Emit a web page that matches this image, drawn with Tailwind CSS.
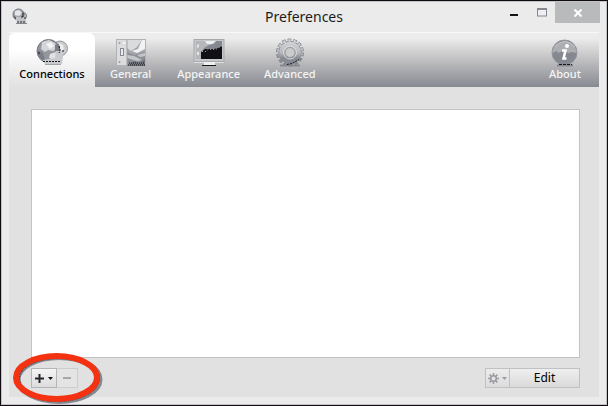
<!DOCTYPE html>
<html lang="en">
<head>
<meta charset="utf-8">
<title>Preferences</title>
<script src="https://cdn.jsdelivr.net/npm/@tailwindcss/browser@4"></script>
</head>
<body class="min-h-screen flex flex-col border border-[#100c12] px-px pt-[2px] pb-px shadow-[inset_0_0_0_1px_#c3c3c6] bg-[#ebebeb] font-['Noto_Sans','Open_Sans',sans-serif] text-black">
  <header class="relative flex h-[29px] shrink-0 items-start justify-center">
    <svg class="absolute left-[10px] top-[5px]" width="16" height="17" viewBox="0 0 16 17" aria-hidden="true">
      <circle cx="11" cy="8" r="3.500" fill="#c4c5c8" stroke="#777a82"/>
      <circle cx="6.500" cy="6.500" r="5.500" fill="#a4a6ab" stroke="#6f727a"/>
      <path d="M3 3l4-1 3 3-3 3-4-1z" fill="#e6e6e8"/>
      <path d="M1 8l3 1 1 3-2-1zM10 4l2 1 0 4-2 1z" fill="#5b5e66"/>
      <path d="M4 9h10v6H6l-2-3z" fill="#c2c3c7"/>
      <path d="M5 14h9M10 8v3M13 9v3" stroke="#222" stroke-dasharray="2 1"/>
      <path d="M4 15.500h11" stroke="#85888f"/>
    </svg>
    <h1 class="text-[14px] leading-[28px] text-[#1c1c20]">Preferences</h1>
    <div class="absolute right-[6px] -top-px flex">
      <button aria-label="Minimize" class="flex h-[21px] w-[28px] items-center justify-center"><svg width="8" height="8"><rect y="5" width="8" height="2" fill="#141418"/></svg></button>
      <button aria-label="Maximize" class="flex h-[21px] w-[27px] items-center justify-center"><svg width="10" height="9"><rect x=".5" y=".5" width="9" height="7.500" fill="#efefef" stroke="#85888f"/><path d="M0 1h10" stroke="#85888f" stroke-width="2"/></svg></button>
      <button aria-label="Close" class="flex h-[21px] w-[45px] items-center justify-center bg-[#b9babc]"><svg width="8" height="8"><path d="M.5 .5l7 7M7.500 .5l-7 7" stroke="#fff" stroke-width="2"/></svg></button>
    </div>
  </header>

  <main class="mx-[7px] mb-[7px] flex flex-1 flex-col bg-[#e1e1e1]">
    <nav class="flex h-[55px] shrink-0 border-t border-[#f8f8f8] bg-linear-to-b from-[#ececec] from-10% via-[#bababc] via-55% to-[#878a92] text-[11px] font-medium leading-[14px] text-[#f4f4f4]" aria-label="Preference sections">
      <button class="flex w-[86px] flex-col items-center rounded-t-[6px] bg-linear-to-b from-white from-30% to-[#e1e1e1] pt-[5px] text-black">
        <svg width="32" height="29" viewBox="0 0 32 29" aria-hidden="true">
          <circle cx="24" cy="10.500" r="7.500" fill="#c9cacd" stroke="#95979c"/>
          <path d="M23 5l4 2 1 4-3 3-3-4z" fill="#ececee"/>
          <circle cx="12.500" cy="13" r="11.500" fill="#93969d" stroke="#767981"/>
          <path d="M6 4l7-2 6 3 2 5-4 3-5-1-3 2-4-3z" fill="#d4d5d8"/>
          <path d="M10 6l5-2 3 4-4 3z" fill="#f4f4f5"/>
          <path d="M14 16l6-2 3 5-5 3-5-2z" fill="#e0e1e3"/>
          <path d="M2 12l5 3 2 7-3 0-4-5zM19 7l4-1 1 7-3 3-2-4z" fill="#7b7e86"/>
          <path d="M20 13h7v6l-1 7H9l-2-4 12-2z" fill="#c9cacd"/>
          <path d="M7 23.500h18M3 14v3M23 8l1 4-1 3M27 12v3" fill="none" stroke="#17171b" stroke-dasharray="2 1"/>
          <path d="M9 26.500h16" stroke="#a1a3a8"/>
        </svg>
        <span>Connections</span>
      </button>
      <button class="flex flex-col items-center px-[13px] ml-[2px] pt-[5px]">
        <svg width="32" height="29" viewBox="0 0 32 29" aria-hidden="true">
          <rect x="1.500" y="1.500" width="29" height="26" fill="#dcdcde" stroke="#b1b2b6"/>
          <path d="M12 2h18v26H12z" fill="#a4a6ac"/>
          <path d="M12 2h15l-5 7-6 4-4-3z" fill="#dadbdd"/>
          <path d="M27 2h3v9l-8 4-5-2 6-2z" fill="#f2f2f3"/>
          <path d="M12 14l7 3 11-3v14H12z" fill="#8d9098"/>
          <path d="M12 17l7 1 8 4-5 1-10-3zM22 17l8-2v3l-5 1z" fill="#c5c6ca"/>
          <path d="M15 25l5-2 4 2 6-4v7H14z" fill="#70737b"/>
          <path d="M14 25h16M13 27h17" stroke="#17171b" stroke-dasharray="1 1"/>
          <path d="M12 2v25" stroke="#a1a3a8"/>
          <rect x="5.500" y="10.500" width="3" height="7" fill="#ececec" stroke="#858891"/>
          <circle cx="4.500" cy="5" r="1" fill="#999ba0"/><circle cx="9" cy="5" r="1" fill="#fff"/><circle cx="4.500" cy="24" r="1" fill="#999ba0"/>
        </svg>
        <span>General</span>
      </button>
      <button class="flex flex-col items-center px-[13px] pt-[5px]">
        <svg width="32" height="29" viewBox="0 0 32 29" aria-hidden="true">
          <rect x="1" y="1.500" width="30" height="22" fill="#c6c7ca" stroke="#a7a9ad"/>
          <rect x="3" y="3" width="26" height="18" fill="#858891"/>
          <path d="M3 3h20l-2 3-5 1-5 3-3 5v6H3z" fill="#b6b7bb"/>
          <path d="M12 3h11l-4 3h-5z" fill="#efeff0"/>
          <path d="M4 7l2-1v3l-2 1zM4 14h2v3H4z" fill="#e6e6e8"/>
          <path d="M8 21v-7l4-3h9l4-1 4-2v13z" fill="#111115"/>
          <path d="M9 13.500h4l2-2h7l3-1 4-3" fill="none" stroke="#a1a3a9" stroke-dasharray="1 2"/>
          <path d="M1 24.500h30" stroke="#e0e0e1"/>
          <path d="M11 24h11v3H11z" fill="#f0f0f0"/>
          <path d="M9 27.500h14" stroke="#17171b"/>
        </svg>
        <span>Appearance</span>
      </button>
      <button class="flex flex-col items-center px-[11px] pt-[5px]">
        <svg width="32" height="29" viewBox="0 0 32 29" aria-hidden="true">
          <defs><linearGradient id="metal" gradientUnits="userSpaceOnUse" x1="0" y1="1" x2="0" y2="28"><stop stop-color="#d8d9da"/><stop offset=".5" stop-color="#b9babd"/><stop offset=".7" stop-color="#898c94"/><stop offset="1" stop-color="#858891"/></linearGradient></defs>
          <circle cx="16" cy="14.500" r="12" fill="none" stroke="#858891" stroke-width="4" stroke-dasharray="3.600 1.785"/>
          <circle cx="16" cy="14.500" r="11.300" fill="url(#metal)" stroke="#8f9299"/>
          <circle cx="16" cy="14.500" r="12" fill="none" stroke="url(#metal)" stroke-width="2.500" stroke-dasharray="2.400 2.985" stroke-dashoffset="-.6"/>
          <circle cx="16" cy="14.500" r="6.500" fill="none" stroke="#dcdcde"/>
          <circle cx="16" cy="14.500" r="5" fill="#cbcbcd" stroke="#94979d"/>
          <path d="M6 27.500h20" stroke="#858891" stroke-width="2"/>
          <path d="M13 26.500l5-1 7-4" fill="none" stroke="#17171b" stroke-dasharray="2 1"/>
        </svg>
        <span>Advanced</span>
      </button>
      <button class="ml-auto flex flex-col items-center px-[18px] pt-[5px]">
        <svg width="32" height="29" viewBox="0 0 32 29" aria-hidden="true">
          <circle cx="15.500" cy="14.500" r="12.500" fill="#858891" stroke="#94969c"/>
          <path d="M3.500 15a12 12 0 0 1 24 0l-5-1-3 1-6-2-4 2-2-2z" fill="#acaeb2"/>
          <path d="M6 9q10-11 20 0" fill="none" stroke="#c2c3c6"/>
          <path d="M8 27.500h16" stroke="#858891" stroke-width="2"/>
          <path d="M10 26.500h13" fill="none" stroke="#17171b" stroke-dasharray="3 1"/>
          <circle cx="18" cy="8" r="2" fill="#fff"/>
          <path d="M13 12.500h3.500l-2 8h3" fill="none" stroke="#fff" stroke-width="2.500"/>
        </svg>
        <span>About</span>
      </button>
    </nav>

    <section class="flex flex-1 flex-col pl-[22px] pt-[22px] pb-[9px] pr-[19px]">
      <div role="listbox" tabindex="0" aria-label="Connections" class="flex-1 border border-[#c3c3c5] bg-white"></div>
      <div class="mt-[10px] flex h-[20px] justify-between text-[12px] leading-[18px]">
        <div class="relative flex">
          <button aria-label="Add connection" class="flex w-[26px] items-center justify-center gap-[4px] border border-[#b4b5b8] bg-linear-to-b from-[#f5f5f5] to-[#dcdcdc]">
            <svg width="9" height="9"><path d="M4.500 0v9M0 4.500h9" stroke="#26262b" stroke-width="2"/></svg>
            <svg width="5" height="3"><path d="M0 0h5L2.500 3z" fill="#111"/></svg>
          </button>
          <button aria-label="Remove connection" disabled class="flex w-[21px] items-center justify-center border border-l-0 border-[#cdcdcf] bg-[#e4e4e4]">
            <svg width="8" height="2"><path d="M0 1h8" stroke="#a5a7ad" stroke-width="2"/></svg>
          </button>
          <svg class="pointer-events-none absolute -left-[20px] -top-[17px] max-w-none" width="96" height="54" viewBox="0 0 96 54" aria-hidden="true">
            <ellipse cx="48" cy="28.500" rx="41" ry="22" fill="none" stroke="#85878f" stroke-width="5"/>
            <ellipse cx="46.500" cy="27" rx="40" ry="21.500" fill="none" stroke="#303037" stroke-width="5" stroke-dasharray="1 1"/>
            <ellipse cx="45.500" cy="26.500" rx="40.500" ry="21.500" fill="none" stroke="#f43212" stroke-width="6"/>
          </svg>
        </div>
        <div class="flex">
          <button aria-label="Connection actions" disabled class="flex w-[25px] items-center justify-center gap-[3px] border border-[#c0c1c4] bg-linear-to-b from-[#ececec] to-[#dcdcdc]">
            <svg width="11" height="11" viewBox="0 0 11 11"><circle cx="5.500" cy="5.500" r="2.800" fill="none" stroke="#989aa0" stroke-width="1.500"/><path d="M5.500 0v2M5.500 9v2M0 5.500h2M9 5.500h2M1.600 1.600l1.500 1.500M7.900 7.900l1.500 1.500M9.400 1.600L7.900 3.100M3.100 7.900L1.600 9.400" stroke="#989aa0" stroke-width="1.500"/></svg>
            <svg width="5" height="3"><path d="M0 0h5L2.500 3z" fill="#989aa0"/></svg>
          </button>
          <button class="w-[70px] border border-l-0 border-[#c0c1c4] bg-linear-to-b from-[#efefef] to-[#dadada]">Edit</button>
        </div>
      </div>
    </section>
  </main>
</body>
</html>
